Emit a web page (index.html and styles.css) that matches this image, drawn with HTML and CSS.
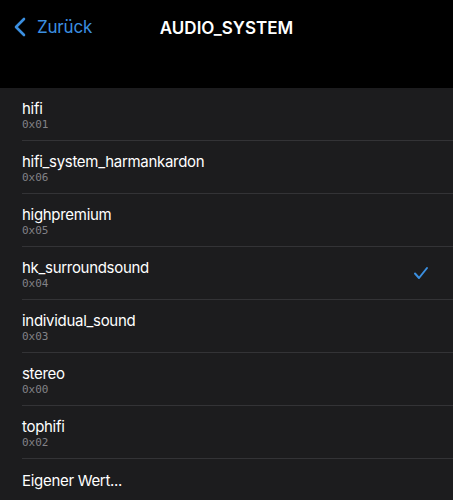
FILE: index.html
```html
<!DOCTYPE html>
<html lang="de">
<head>
  <meta charset="UTF-8">
  <meta name="viewport" content="width=device-width, initial-scale=1.0">
  <title>AUDIO_SYSTEM</title>
  <link rel="stylesheet" href="styles.css">
</head>
<body>
  <div class="nav-bar">
    <a class="back-btn" href="#">
      <svg class="chevron" width="12" height="20" viewBox="0 0 12 20">
        <path d="M10 2 L2 10 L10 18" fill="none" stroke="#3b8fe0" stroke-width="2.6" stroke-linecap="round" stroke-linejoin="round"/>
      </svg>
      <span>Zurück</span>
    </a>
    <div class="nav-title">AUDIO_SYSTEM</div>
  </div>

  <div class="option-list">
    <div class="option-row">
      <div class="option-text">
        <div class="option-name">hifi</div>
        <div class="option-code">0x01</div>
      </div>
    </div>
    <div class="option-row">
      <div class="option-text">
        <div class="option-name">hifi_system_harmankardon</div>
        <div class="option-code">0x06</div>
      </div>
    </div>
    <div class="option-row">
      <div class="option-text">
        <div class="option-name">highpremium</div>
        <div class="option-code">0x05</div>
      </div>
    </div>
    <div class="option-row selected">
      <div class="option-text">
        <div class="option-name">hk_surroundsound</div>
        <div class="option-code">0x04</div>
      </div>
      <svg class="check" width="16" height="14" viewBox="0 0 16 14">
        <path d="M2 7.5 L6 12 L14 2" fill="none" stroke="#3b8fe0" stroke-width="2" stroke-linecap="round" stroke-linejoin="round"/>
      </svg>
    </div>
    <div class="option-row">
      <div class="option-text">
        <div class="option-name">individual_sound</div>
        <div class="option-code">0x03</div>
      </div>
    </div>
    <div class="option-row">
      <div class="option-text">
        <div class="option-name">stereo</div>
        <div class="option-code">0x00</div>
      </div>
    </div>
    <div class="option-row">
      <div class="option-text">
        <div class="option-name">tophifi</div>
        <div class="option-code">0x02</div>
      </div>
    </div>
    <div class="option-row custom">
      <div class="option-name">Eigener Wert...</div>
    </div>
  </div>
</body>
</html>
```

FILE: styles.css
```css
body {
  margin: 0;
  background-color: #1c1c1e;
  font-family: Inter, "Noto Sans", sans-serif;
  color: #fff;
  overflow: hidden;
}
.nav-bar {
  position: relative;
  height: 88px;
  background-color: #000;
}
.back-btn {
  position: absolute;
  top: 17px;
  left: 14px;
  display: flex;
  align-items: center;
  gap: 11px;
  color: #3b8fe0;
  text-decoration: none;
  font-size: 17px;
  letter-spacing: -0.2px;
}
.nav-title {
  padding-top: 17px;
  text-align: center;
  font-size: 17px;
  font-weight: 600;
  line-height: 22px;
}
.option-list {
  padding-left: 22px;
}
.option-row {
  display: flex;
  align-items: center;
  justify-content: space-between;
  height: 52px;
  border-bottom: 1px solid #333336;
  padding-right: 24px;
}
.option-text {
  padding-top: 3px;
}
.option-name {
  font-size: 15px;
  line-height: 18px;
  letter-spacing: -0.3px;
}
.option-code {
  font-family: "DejaVu Sans Mono", monospace;
  font-size: 11px;
  line-height: 14px;
  color: #828287;
}
.option-row.custom {
  height: 44px;
  border-bottom: none;
}
```
